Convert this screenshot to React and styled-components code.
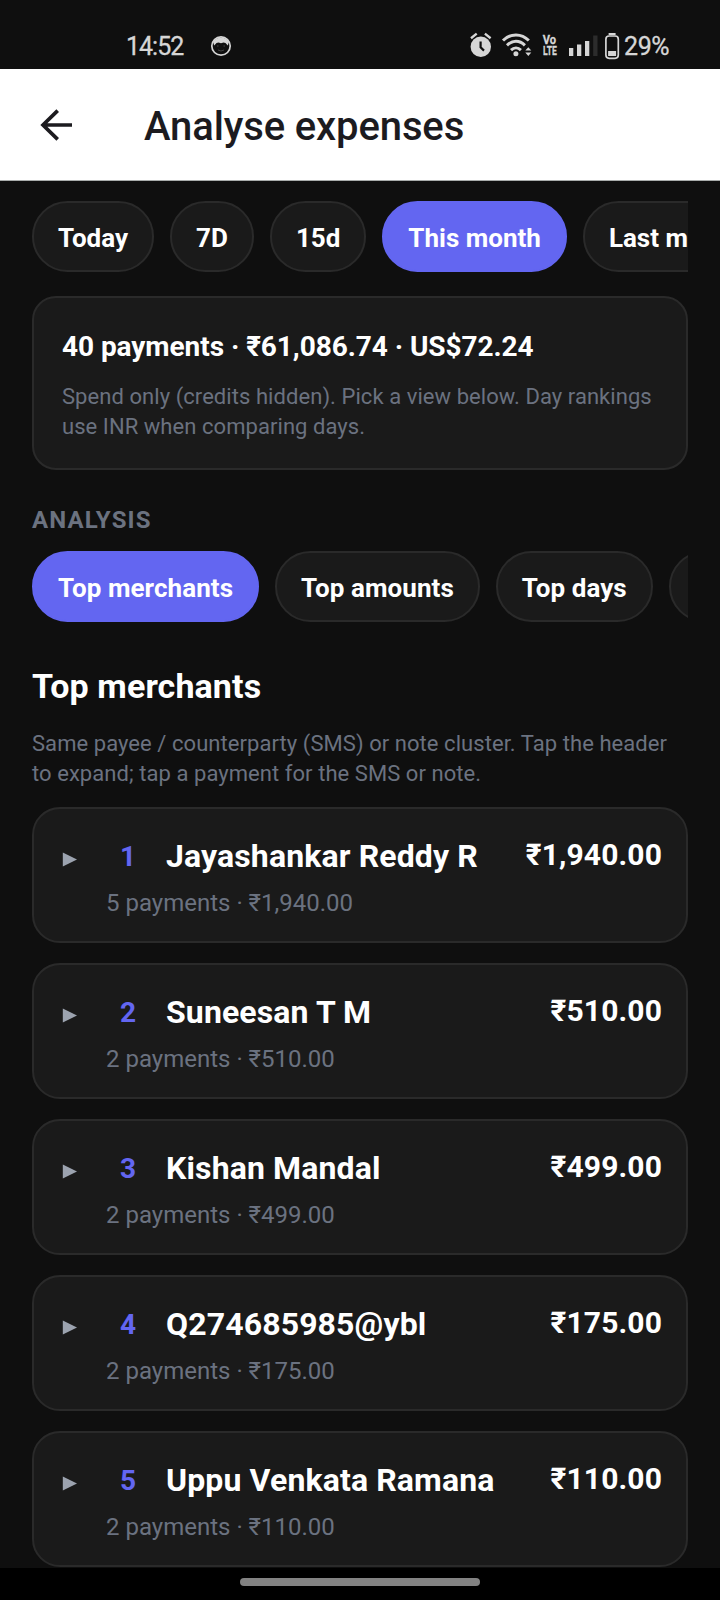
import React from "react";
import styled, { createGlobalStyle } from "styled-components";

const Global = createGlobalStyle`
  * { box-sizing: border-box; }
  body { margin: 0; background: #0f0f0f; font-family: Roboto, "Noto Sans", sans-serif; }
`;

const Screen = styled.div`
  width: 720px;
  height: 1600px;
  overflow: hidden;
  display: flex;
  flex-direction: column;
  background: #0f0f0f;
  color: #fff;
`;

const StatusBar = styled.div`
  height: 69px;
  flex: none;
  padding: 24px 48px 0 126px;
  display: flex;
  align-items: flex-start;
  justify-content: space-between;
  color: #d6d6d6;
`;
const StatusGroup = styled.div`
  display: flex;
  align-items: center;
  height: 44px;
`;
const Clock = styled.span`
  font-size: 25px;
  width: 84px;
  letter-spacing: -1px;
  -webkit-text-stroke: 0.3px #d6d6d6;
`;
const Battery = styled.span`
  font-size: 25px;
  width: 48px;
  letter-spacing: -0.4px;
  -webkit-text-stroke: 0.3px #d6d6d6;
`;

const Header = styled.header`
  height: 112px;
  flex: none;
  display: flex;
  align-items: center;
  gap: 72px;
  padding: 0 40px;
  background: #fff;
  border-bottom: 1px solid #a9acab;
  color: #1c1b1f;
`;
const Title = styled.h1`
  margin: 5px 0 0;
  font-size: 40px;
  line-height: 48px;
  font-weight: 500;
  letter-spacing: -0.12px;
`;

const Body = styled.main`
  flex: 1;
  min-height: 0;
  overflow: hidden;
  padding: 20px 32px 0;
`;
const ChipRow = styled.div`
  display: flex;
  gap: 16px;
  overflow: hidden;
  letter-spacing: ${(p) => p.$tracking || 0}px;
`;
const Chip = styled.button`
  flex: none;
  height: 71px;
  padding: 2px 24px 0;
  border: 2px solid ${(p) => (p.$active ? "#6366f1" : "#2a2a2a")};
  border-radius: 36px;
  background: ${(p) => (p.$active ? "#6366f1" : "#1a1a1a")};
  color: #fff;
  font: 700 26px/34px Roboto, sans-serif;
  letter-spacing: inherit;
`;

const Summary = styled.section`
  height: 174px;
  margin-top: 24px;
  padding: 31px 28px 0;
  border: 2px solid #2a2a2a;
  border-radius: 24px;
  background: #1a1a1a;
`;
const SummaryTotal = styled.div`
  font-size: 28px;
  line-height: 36px;
  font-weight: 700;
  letter-spacing: -0.06px;
`;
const Note = styled.p`
  margin: ${(p) => p.$top}px 0 0;
  font-size: 22px;
  line-height: 30px;
  letter-spacing: 0.06px;
  color: #6b7280;
  white-space: nowrap;
`;

const Label = styled.h2`
  margin: 35px 0 15px;
  font-size: 24px;
  line-height: 31px;
  font-weight: 700;
  letter-spacing: 1.15px;
  color: #6b7280;
`;
const SectionTitle = styled.h2`
  margin: 42px 0 0;
  font-size: 34px;
  line-height: 44px;
  font-weight: 700;
  letter-spacing: 0.1px;
`;

const List = styled.div`
  display: flex;
  flex-direction: column;
  gap: 20px;
  margin-top: 18px;
`;
const Card = styled.article`
  height: 136px;
  flex: none;
  padding: 28px 24px 0 28px;
  border: 2px solid #2a2a2a;
  border-radius: 28px;
  background: #1a1a1a;
`;
const CardTop = styled.div`
  display: flex;
  height: 40px;
  align-items: flex-start;
`;
const Arrow = styled.svg`
  width: 15px;
  height: 15px;
  margin-top: 15px;
  flex: none;
`;
const Rank = styled.span`
  width: 44px;
  margin: 2px 16px 0 29px;
  text-align: center;
  font-size: 28px;
  line-height: 36px;
  font-weight: 700;
  color: #6366f1;
`;
const Name = styled.span`
  flex: 1;
  font-size: 32px;
  line-height: 38px;
  font-weight: 700;
  letter-spacing: 0.13px;
  white-space: nowrap;
`;
const Amount = styled.span`
  font-size: 30px;
  line-height: 36px;
  font-weight: 700;
  letter-spacing: 0.12px;
`;
const Meta = styled.div`
  margin: 11px 0 0 44px;
  font-size: 24px;
  line-height: 30px;
  color: #6b7280;
`;

const NavBar = styled.footer`
  height: 32px;
  flex: none;
  display: flex;
  justify-content: center;
  align-items: flex-start;
  padding-top: 10px;
  background: #000;
`;
const NavHandle = styled.div`
  width: 240px;
  height: 8px;
  border-radius: 4px;
  background: #828282;
`;

const periods = ["Today", "7D", "15d", "This month", "Last month"];
const views = ["Top merchants", "Top amounts", "Top days", "Top notes"];
const merchants = [
  { name: "Jayashankar Reddy R", count: 5, amount: "₹1,940.00" },
  { name: "Suneesan T M", count: 2, amount: "₹510.00" },
  { name: "Kishan Mandal", count: 2, amount: "₹499.00" },
  { name: "Q274685985@ybl", count: 2, amount: "₹175.00" },
  { name: "Uppu Venkata Ramana", count: 2, amount: "₹110.00" },
];

const FaceIcon = () => (
  <svg width="22" height="22" viewBox="0 0 22 22">
    <circle cx="11" cy="11" r="9.2" fill="none" stroke="#d6d6d6" strokeWidth="1.7" />
    <path d="M3 7C5.500 1 16.500 1 19 7L17.800 10.500 15.500 8 13.500 7.500 11 8.200 8.500 7.500 6.500 8 4.200 10.500z" fill="#d6d6d6" />
    <path d="M7 11h1.500M13.500 11H15M8 15l3 1 3-1" stroke="#444" strokeWidth="1" fill="none" />
  </svg>
);

const StatusIcons = () => (
  <svg width="154" height="32" viewBox="0 0 154 32" fill="#d6d6d6">
    <circle cx="10.800" cy="16.800" r="10.200" />
    <path d="M1 8.200 6.700 3.600M14.900 3.600l5.700 4.600" stroke="#d6d6d6" strokeWidth="2.4" fill="none" />
    <path d="M10.600 11.500V17.200l3.400 3.400" stroke="#0f0f0f" strokeWidth="2.2" fill="none" />
    <g fill="none" stroke="#d6d6d6" strokeWidth="3">
      <path d="M33 10.500C40.500 3 51.500 3 58.800 10.500" />
      <path d="M37 15.400C42.500 10 49.500 10 54.900 15.400" />
      <path d="M41 20.100C44 17.300 48 17.300 50.900 20.100" />
    </g>
    <circle cx="45.900" cy="23.800" r="2.500" />
    <path d="M55.300 20.600 58.300 17.200 61.300 20.600zM55.300 22.600 58.300 26 61.300 22.600z" />
    <g fontFamily="Roboto, sans-serif" fontWeight="700" stroke="#d6d6d6" strokeWidth="0.300">
      <text transform="translate(72.800 14) scale(0.860 1)" fontSize="13">Vo</text>
      <text transform="translate(73 25.200) scale(0.660 1)" fontSize="13">LTE</text>
    </g>
    <path d="M99 18h4.300v8H99zM107 14.500h4.300V26H107zM115 11h4.300v15H115z" />
    <path d="M123.200 5.500h4.300V26h-4.300z" fill="#2c2c2c" />
    <rect x="135.900" y="6" width="12.400" height="22.300" rx="3.200" fill="none" stroke="#d6d6d6" strokeWidth="1.700" />
    <path d="M138.600 3h7v1.900h-7zM138.100 21h8v5h-8z" />
  </svg>
);

const BackArrow = () => (
  <svg width="32" height="32" viewBox="0 0 32 32" fill="none" stroke="#1c1b1f" strokeWidth="3.700">
    <path d="M32 16H3M17.700 1.600 3 16l14.700 14.400" />
  </svg>
);

export default function App() {
  return (
    <Screen>
      <Global />
      <StatusBar>
        <StatusGroup>
          <Clock>14:52</Clock>
          <FaceIcon />
        </StatusGroup>
        <StatusGroup>
          <StatusIcons />
          <Battery>29%</Battery>
        </StatusGroup>
      </StatusBar>
      <Header>
        <BackArrow />
        <Title>Analyse expenses</Title>
      </Header>
      <Body>
        <ChipRow>
          {periods.map((p) => (
            <Chip key={p} $active={p === "This month"}>{p}</Chip>
          ))}
        </ChipRow>
        <Summary>
          <SummaryTotal>40 payments · ₹61,086.74 · US$72.24</SummaryTotal>
          <Note $top={17}>
            Spend only (credits hidden). Pick a view below. Day rankings
            <br />
            use INR when comparing days.
          </Note>
        </Summary>
        <Label>ANALYSIS</Label>
        <ChipRow $tracking={0.06}>
          {views.map((v) => (
            <Chip key={v} $active={v === "Top merchants"}>{v}</Chip>
          ))}
        </ChipRow>
        <SectionTitle>Top merchants</SectionTitle>
        <Note $top={21}>
          Same payee / counterparty (SMS) or note cluster. Tap the header
          <br />
          to expand; tap a payment for the SMS or note.
        </Note>
        <List>
          {merchants.map((m, i) => (
            <Card key={m.name}>
              <CardTop>
                <Arrow viewBox="0 0 15 15">
                  <path d="M.8.500 15 7.500.8 14.500z" fill="#9ca3af" />
                </Arrow>
                <Rank>{i + 1}</Rank>
                <Name>{m.name}</Name>
                <Amount>{m.amount}</Amount>
              </CardTop>
              <Meta>{m.count} payments · {m.amount}</Meta>
            </Card>
          ))}
        </List>
      </Body>
      <NavBar>
        <NavHandle />
      </NavBar>
    </Screen>
  );
}
